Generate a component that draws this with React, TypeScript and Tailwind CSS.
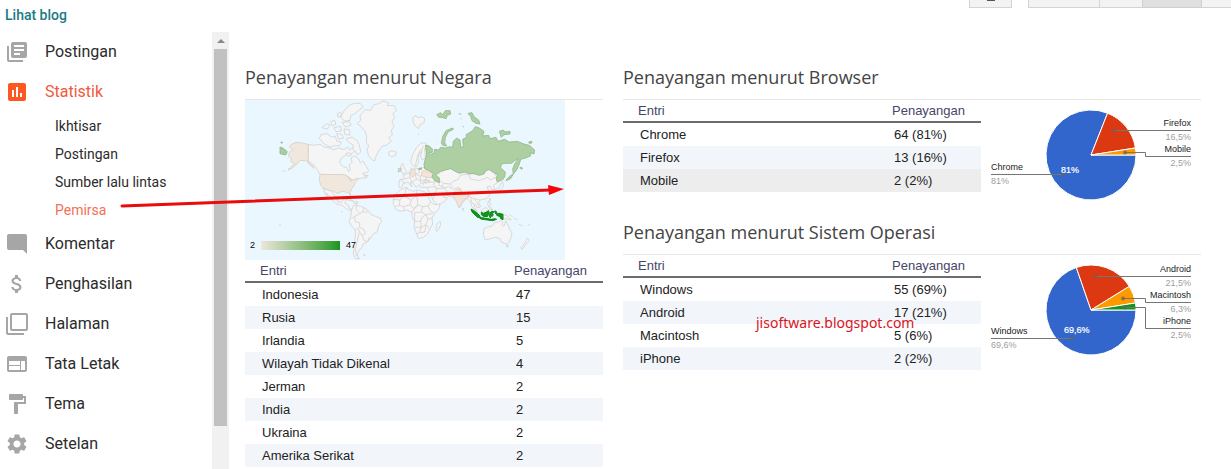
import {
  MdAttachMoney, MdFilterNone, MdFormatPaint, MdInsertChart,
  MdLibraryBooks, MdModeComment, MdSettings, MdWeb,
} from 'react-icons/md'

// --- DATA ---
const menuAtas = [{ label: 'Postingan', Icon: MdLibraryBooks }]

const subMenu = ['Ikhtisar', 'Postingan', 'Sumber lalu lintas', 'Pemirsa']

const menuBawah = [
  { label: 'Komentar', Icon: MdModeComment },
  { label: 'Penghasilan', Icon: MdAttachMoney },
  { label: 'Halaman', Icon: MdFilterNone },
  { label: 'Tata Letak', Icon: MdWeb },
  { label: 'Tema', Icon: MdFormatPaint },
  { label: 'Setelan', Icon: MdSettings },
]

const negara = [
  ['Indonesia', '47'],
  ['Rusia', '15'],
  ['Irlandia', '5'],
  ['Wilayah Tidak Dikenal', '4'],
  ['Jerman', '2'],
  ['India', '2'],
  ['Ukraina', '2'],
  ['Amerika Serikat', '2'],
]

const browser = [
  ['Chrome', '64 (81%)'],
  ['Firefox', '13 (16%)'],
  ['Mobile', '2 (2%)'],
]

const sistem = [
  ['Windows', '55 (69%)'],
  ['Android', '17 (21%)'],
  ['Macintosh', '5 (6%)'],
  ['iPhone', '2 (2%)'],
]

// --- SIDEBAR ---
function MenuItem({ label, Icon, active = false }: { label: string; Icon: any; active?: boolean }) {
  return (
    <li>
      <a href="#" className={`flex h-10 items-center gap-4 pl-[5px] text-base ${active ? 'text-[#f2583a]' : 'text-[#2b2b2b]'}`}>
        <Icon size={24} className={active ? 'text-[#ff5722]' : 'text-[#a6a6a6]'} />
        {label}
      </a>
    </li>
  )
}

function Sidebar() {
  return (
    <nav className="min-w-0 flex-1 overflow-hidden">
      <ul>
        {menuAtas.map((m) => <MenuItem key={m.label} {...m} />)}
        <MenuItem label="Statistik" Icon={MdInsertChart} active />
        <li>
          <ul>
            {subMenu.map((s) => (
              <li key={s}>
                <a href="#" className={`flex h-7 items-center pl-[55px] text-sm ${s === 'Pemirsa' ? 'text-[#f2705a]' : 'text-[#2b2b2b]'}`}>{s}</a>
              </li>
            ))}
          </ul>
        </li>
        {menuBawah.map((m) => <MenuItem key={m.label} {...m} />)}
      </ul>
    </nav>
  )
}

function Scrollbar() {
  return (
    <div className="flex w-[17px] shrink-0 flex-col bg-[#f1f1f1]">
      <div className="flex h-[17px] shrink-0 items-center justify-center">
        <svg width="8" height="4" viewBox="0 0 8 4"><path d="M0 4L4 0L8 4Z" fill="#8a8a8a" /></svg>
      </div>
      <div className="mx-0.5 flex-[377] bg-[#c1c1c1]" />
      <div className="flex-[43]" />
    </div>
  )
}

// --- TABLE ---
function TabelEntri({ rows, sorot }: { rows: string[][]; sorot?: string }) {
  return (
    <table className="w-full table-fixed border-separate border-spacing-0 text-left text-[13px] leading-5 text-[#222]">
      <thead>
        <tr className="h-[23px] text-[#464668]">
          <th className="w-[269px] border-b-2 border-[#6b6b70] p-0 pl-[15px] font-normal">Entri</th>
          <th className="border-b-2 border-[#6b6b70] p-0 font-normal">Penayangan</th>
        </tr>
      </thead>
      <tbody>
        {rows.map(([nama, nilai]) => (
          <tr key={nama} className={`h-[23px] ${nama === sorot ? 'bg-[#ededed]' : 'even:bg-[#f2f6fb]'}`}>
            <td className="p-0 pl-[17px]">{nama}</td>
            <td className="p-0 pl-0.5">{nilai}</td>
          </tr>
        ))}
      </tbody>
    </table>
  )
}

function Judul({ children }: { children: string }) {
  return (
    <h2 className="border-b border-[#e6e6e6] pb-2.5 font-['Open_Sans',sans-serif] text-lg leading-6 text-[#444]">{children}</h2>
  )
}

// --- PIE CHART ---
type Label = { nama: string; persen: string; y: number; garis: string; dot: [number, number]; kiri?: boolean }

function Pie({ nilai, dalam, labels }: { nilai: number[]; dalam: { t: string; x: number; y: number }; labels: Label[] }) {
  const warna = ['#3366cc', '#dc3912', '#ff9900', '#109618']
  let mulai = 0
  return (
    <svg viewBox="0 0 220 110" className="h-[110px] w-[220px] shrink-0 font-['Liberation_Sans',Arial,sans-serif] text-[9px]">
      {nilai.map((v, i) => {
        const a = (mulai / 100) * Math.PI * 2
        mulai += v
        const b = (mulai / 100) * Math.PI * 2
        const d = `M110 55L${110 + 45 * Math.cos(a)} ${55 + 45 * Math.sin(a)}A45 45 0 ${v > 50 ? 1 : 0} 1 ${110 + 45 * Math.cos(b)} ${55 + 45 * Math.sin(b)}Z`
        return <path key={i} d={d} fill={warna[i]} stroke="#fff" strokeWidth="1" />
      })}
      {labels.map((l) => (
        <g key={l.nama}>
          <path d={l.garis} fill="none" stroke="#757575" strokeWidth="1" />
          <circle cx={l.dot[0]} cy={l.dot[1]} r="2" fill="#636363" fillOpacity="0.7" />
          <text x={l.kiri ? 10 : 210} y={l.y} textAnchor={l.kiri ? 'start' : 'end'} fill="#222">{l.nama}</text>
          <text x={l.kiri ? 10 : 210} y={l.y + 14} textAnchor={l.kiri ? 'start' : 'end'} fill="#9e9e9e">{l.persen}</text>
        </g>
      ))}
      <text x={dalam.x} y={dalam.y} fill="#fff" stroke="#fff" strokeWidth="0.2">{dalam.t}</text>
    </svg>
  )
}

// --- WORLD MAP ---
function Peta() {
  return (
    <div className="relative h-40 w-[320px] max-w-full overflow-hidden bg-[#eaf7fe]">
      <svg viewBox="0 0 960 480" className="h-full w-full" fill="#f5f5f5" stroke="#d3d3d3" strokeWidth="2.5" strokeLinejoin="round">
        {/* Americas */}
        <g transform="translate(-15 -135)">
          <path d="M205 268L222 271L240 268L252 276L266 278L280 284L296 279L312 284L322 276L330 286L340 274L346 284L336 296L322 298L304 308L299 322L308 334L320 338L326 350L331 346L328 330L336 322L334 308L344 303L356 312L361 324L369 318L377 332L386 346L380 353L368 355L374 362L384 361L378 368L362 370L350 372L338 376L326 366L312 360L240 358L232 344L222 330L212 322L204 318Z" />
          <path d="M244 238L262 236L274 246L286 244L290 258L304 262L298 272L284 272L270 276L254 268L238 250ZM246 218L258 206L270 210L262 222ZM272 200L284 196L288 208L276 212ZM282 218L302 214L304 228L288 230ZM290 236L306 238L310 250L296 252ZM312 222L328 224L330 240L314 238ZM336 246L352 258L358 270L362 292L352 300L346 288L338 282L340 270L326 262L318 252ZM302 186L312 168L326 152L344 144L362 146L370 156L356 166L344 176L332 182L330 196L314 198ZM306 202L328 200L334 210L316 216ZM318 296L328 292L334 300L324 304ZM292 176L302 172L304 184L294 186Z" />
          <path d="M352 206L362 196L360 182L376 164L392 166L400 150L416 146L430 138L446 144L442 152L462 152L470 166L458 176L464 186L456 200L462 214L454 226L457 240L446 248L454 258L440 270L426 274L416 288L408 304L404 318L396 314L386 302L381 286L386 272L379 262L380 244L374 226L362 214Z" />
          <path d="M446 292L456 287L469 292L467 300L456 306L446 300Z" />
          <path d="M250 400L268 406L276 410L282 420L290 426L293 440L304 442L312 432L320 432L314 444L324 450L328 460L340 464L334 468L320 462L308 452L288 446L276 434L264 418L258 414L264 428L256 418Z" />
          <path d="M312 428L328 432L340 438L326 436ZM342 440L354 441L352 446L342 444ZM374 360L384 362L378 368Z" />
          <path d="M334 468L340 452L350 450L372 458L384 466L392 478L406 484L422 490L425 500L416 512L412 530L398 538L392 550L380 562L370 566L366 578L356 586L352 600L358 612L346 610L340 596L343 570L346 544L346 526L334 512L327 500L332 486Z" />
          <path d="M350 450L348 464L360 476L344 484L334 490M372 458L368 470L380 472L384 466M360 476L368 470M344 484L346 500L360 504L358 516L372 524L376 536L366 542L372 556L384 560M346 526L354 518L358 530L352 556L346 584L350 604M384 560L388 546M358 530L366 542" fill="none" />
          <circle cx="373" cy="600" r="2" /><circle cx="120" cy="510" r="1" /><circle cx="306" cy="470" r="1" />
          {/* Alaska and mainland US */}
          <g fill="#f1e8dd" stroke="#d9cfc4">
            <path d="M205 268L186 264L168 262L154 268L148 276L160 284L148 292L146 304L154 310L152 320L164 326L154 336L144 344L158 338L172 326L180 316L196 317L206 322L218 332L222 340L206 326L204 318Z" />
            <path d="M240 358L314 359L326 366L328 374L338 376L350 370L356 372L346 382L342 392L336 400L330 412L332 422L324 412L306 409L292 416L282 408L268 406L250 400L242 390L238 374Z" />
          </g>
          <path d="M318 362L326 368L334 380M326 368L338 376" fill="none" />
          <path d="M120 276L130 280L142 290L137 300L120 296ZM122 262L127 261L126 265Z" fill="#a9cd9f" stroke="#8fb886" />
          <path d="M126 348L130 349M133 349L137 347M145 345L150 343" />
        </g>

        {/* Europe, Africa, Asia, Oceania */}
        <g transform="translate(465 -30)">
          <path d="M38 84L48 76L54 84L64 80L74 86L72 98L60 104L56 116L46 108L40 98ZM54 132L58 133" />
          <path d="M38 226L32 214L38 194L50 172L62 160L76 158L82 168L74 176L76 204L66 210L62 198L66 184L58 190L54 206L56 218L48 232Z" />
          <path d="M46 228L52 200L62 178M64 184L70 168" fill="none" />
          <path d="M2 228L8 220L12 232L20 246L8 252L4 242Z" />
          <path d="M-5 236L3 234L2 244L-5 246Z" fill="#d3e2c8" stroke="#b5c9ab" />
          <path d="M-3 278L0 268L12 268L10 256L28 248L34 234L40 238L72 232L96 240L118 252L116 240L130 240L150 235L170 245L210 250L240 255L266 240L286 250L294 276L280 286L284 298L276 300L270 288L262 290L266 304L270 314L260 326L240 330L236 338L242 350L232 354L226 344L222 352L232 368L226 366L216 350L210 334L200 324L188 338L178 354L168 330L160 322L146 318L126 312L132 322L142 324L132 336L112 346L98 328L88 306L80 292L62 292L58 284L48 292L40 280L30 276L36 290L24 276L10 280L6 292L-3 292Z" />
          <path d="M0 268L14 280M12 268L30 262L28 248M30 262L36 276L50 268L44 252L58 248L56 236M50 268L62 272L60 258L44 252M62 272L78 268L90 276L62 280ZM78 268L76 252L94 248M60 258L76 256M90 276L106 276L100 284L112 296L132 294L140 304L146 318M80 292L100 290L112 296L106 306L98 328M118 270L130 280L150 282L160 274L176 268L180 256L206 252L210 266L238 272L262 262L272 270L286 262M130 280L126 290L132 294L146 290L160 298L176 292L186 306L206 312L212 322L222 326L240 330M106 256L118 272L116 286L128 290M150 282L158 292M206 312L204 324M212 322L216 340L226 344M222 326L232 338L236 350" fill="none" />
          <path d="M34 240L44 236L46 252L38 262L31 254Z" fill="#f4e4d8" stroke="#dccfc4" />
          <path d="M66 244L76 242L96 248L98 260L88 264L74 260L64 256Z" fill="#f4e4d8" stroke="#dccfc4" />
          <path d="M90 272L76 272L68 286M70 274L82 270L88 276L76 280Z" fill="#eaf7fe" />
          <path d="M-20 326L-12 312L0 300L20 292L26 300L42 304L50 300L76 306L82 316L92 336L104 344L120 342L118 354L104 370L96 384L98 402L90 416L84 430L70 442L56 446L50 432L42 412L44 394L36 380L36 366L20 360L0 364L-12 358L-20 342Z" />
          <path d="M-20 328L0 330L12 318L20 292M0 330L-2 346L-14 350M-2 346L10 350L14 362M12 318L34 330L30 344L10 350M34 330L50 316L50 300M50 316L78 318M50 316L54 344L36 366M30 344L40 356L54 344L68 350L84 348L92 336M68 350L64 366L78 374L98 370M64 366L44 368L44 394L62 394L66 382L78 374L84 388L96 384M62 394L64 412L44 412M64 412L78 404L84 388M64 412L58 428L50 432M78 404L88 416M84 348L90 362L104 370M60 428L74 426L78 404" fill="none" />
          <path d="M108 416L112 400L121 395L122 404L114 422L108 424Z" />
          <path d="M160 310L164 304L172 298L182 296L184 306L196 314L206 316L202 324L192 328L184 340L180 352L176 352L170 334L162 326Z" fill="#f4e4d8" stroke="#dccfc4" />
          <path d="M188 354L192 358L188 362ZM268 326L272 326L269 334ZM264 334L272 340L270 350L278 360L270 358L264 346ZM290 304L304 300L310 288L308 276L302 280L298 294L286 298ZM302 274L312 268L306 264ZM226 356L232 366L236 374ZM244 362L258 352L264 358L258 366L248 370Z" />
          <path d="M252 416L262 411L276 408L284 398L296 396L302 392L308 396L304 404L312 408L318 392L322 402L328 414L336 430L332 446L326 458L318 462L304 456L300 446L286 442L272 446L256 450L250 434ZM318 466L325 466L322 472Z" />
          <path d="M308 372L322 378L334 390L318 386L308 388ZM328 374L338 380M342 384L352 390M356 402L368 408M384 406L390 402M382 444L388 452L378 462L366 478L362 474L374 460Z" />

          {/* Rusia */}
          <g fill="#aecfa2" stroke="#94b78c">
            <path d="M76 166L88 168L98 178L96 188L86 188L92 194L102 188L104 178L116 180L122 172L136 174L150 170L158 172L160 154L170 144L180 150L182 172L190 170L188 148L200 142L198 134L218 122L226 110L238 114L252 124L248 138L266 136L270 146L288 142L294 154L314 148L328 156L352 154L372 162L388 166L404 180L402 192L390 188L392 198L376 204L362 208L358 222L350 240L340 252L338 236L346 218L356 206L344 212L334 220L316 220L304 222L302 234L316 246L314 262L300 272L292 276L288 264L294 254L284 250L268 238L256 242L252 252L238 256L220 250L208 252L196 246L178 250L166 244L152 236L136 240L118 246L108 254L118 264L118 278L104 272L96 262L100 250L88 242L74 236L72 222L76 206L80 192Z" />
            <path d="M124 160L128 140L138 122L158 114L160 118L144 126L136 142L134 158L140 168L128 166ZM110 74L122 68L128 74L136 62L150 62L152 72L142 76L138 86L126 82L116 82ZM204 70L216 68L222 80L236 90L240 102L228 100L216 92L212 80ZM298 124L310 120L316 126L330 124L330 132L312 134L304 142ZM386 156L396 154L394 160L388 160ZM320 268L330 258L340 252L332 266L318 272ZM360 232L368 234L364 238Z" />
            <path d="M176 72L184 72M182 86L184 86M188 108L192 112M56 236L64 234L65 238L57 239Z" />
          </g>

          {/* Indonesia */}
          <g fill="#109618" stroke="#0f8a1a" strokeWidth="3">
            <path d="M213 357L222 362L232 370L240 378L240 384L232 382L222 372L216 366ZM240 382L252 384L264 386L274 388L284 386L290 388L278 392L262 390L242 387ZM244 366L250 370L260 366L266 362L268 370L262 380L250 379L244 374ZM270 370L274 364L284 365L280 369L274 370L280 374L276 380L274 376L271 384L268 378ZM286 362L290 366L287 372ZM290 370L298 370L309 373L309 389L302 386L300 380L290 376Z" />
          </g>
        </g>
      </svg>
      {/* Legend */}
      <div className="absolute bottom-[9px] left-[5px] flex items-center gap-1.5 text-[9px] leading-3 text-black [text-shadow:0_0_2px_white,0_0_2px_white]">
        <span>2</span>
        <span className="h-[9px] w-[79px] bg-linear-to-r from-[#efe6dc] to-[#109618]" />
        <span>47</span>
      </div>
    </div>
  )
}

export default function App() {
  return (
    <div className="relative flex h-screen flex-col overflow-hidden bg-white font-['Liberation_Sans',Arial,sans-serif]">
      {/* Top bar */}
      <header className="flex h-8 shrink-0 items-start justify-between">
        <a href="#" className="pl-[5px] pt-[5px] font-['Roboto',sans-serif] text-sm font-medium leading-5 text-[#1b7a85]">Lihat blog</a>
        <div className="flex h-2">
          <button aria-label="Segarkan" className="mr-4 flex w-[43px] items-start justify-center border border-t-0 border-[#d4d4d4] bg-[#f3f3f3]">
            <span className="h-px w-2 bg-[#555]" />
          </button>
          <button aria-label="Hari" className="w-[72px] border border-t-0 border-[#d4d4d4] bg-[#f3f3f3]" />
          <button aria-label="Minggu" className="w-[42px] border-b border-[#d4d4d4] bg-[#f3f3f3]" />
          <button aria-label="Bulan" className="w-[60px] border border-t-0 border-[#cfcfcf] bg-[#e0e0e0]" />
          <button aria-label="Sepanjang waktu" className="w-[29px] border-b border-[#d4d4d4] bg-[#f3f3f3]" />
        </div>
      </header>

      <div className="flex min-h-0 flex-1">
        <aside className="flex w-[229px] shrink-0 font-['Roboto',sans-serif]">
          <Sidebar />
          <Scrollbar />
        </aside>

        <main className="grid flex-1 grid-cols-[358fr_578fr] items-start gap-5 pl-4 pr-[30px] pt-[33px]">
          <section>
            <Judul>Penayangan menurut Negara</Judul>
            <Peta />
            <TabelEntri rows={negara} />
          </section>

          <div className="flex flex-col gap-2.5">
            <section>
              <Judul>Penayangan menurut Browser</Judul>
              <div className="flex items-start">
                <TabelEntri rows={browser} sorot="Mobile" />
                <Pie
                  nilai={[81, 16.5, 2.5]}
                  dalam={{ t: '81%', x: 80, y: 73 }}
                  labels={[
                    { nama: 'Chrome', persen: '81%', y: 70, garis: 'M10 74.5H82', dot: [82, 74.5], kiri: true },
                    { nama: 'Firefox', persen: '16,5%', y: 26, garis: 'M133 30.5H210', dot: [133, 30.5] },
                    { nama: 'Mobile', persen: '2,5%', y: 52, garis: 'M144 52.5H164.5V56.5H210', dot: [144, 52.5] },
                  ]}
                />
              </div>
            </section>

            <section>
              <Judul>Penayangan menurut Sistem Operasi</Judul>
              <div className="relative flex items-start">
                <TabelEntri rows={sistem} />
                <Pie
                  nilai={[69.7, 21.5, 6.3, 2.5]}
                  dalam={{ t: '69,6%', x: 83, y: 78 }}
                  labels={[
                    { nama: 'Windows', persen: '69,6%', y: 79, garis: 'M10 83.5H91', dot: [91, 83.5], kiri: true },
                    { nama: 'Android', persen: '21,5%', y: 17, garis: 'M115 21.5H210', dot: [115, 21.5] },
                    { nama: 'Macintosh', persen: '6,3%', y: 43, garis: 'M142 43.5H164.5V47.5H210', dot: [142, 43.5] },
                    { nama: 'iPhone', persen: '2,5%', y: 69, garis: 'M144 52.5H164.5V73.5H210', dot: [144, 52.5] },
                  ]}
                />
                <span className="absolute left-[133px] top-[58px] font-['Noto_Sans',sans-serif] text-sm leading-5 text-[#dd1420]">jisoftware.blogspot.com</span>
              </div>
            </section>
          </div>
        </main>
      </div>

      {/* Arrow from Pemirsa to the reports */}
      <svg className="pointer-events-none absolute left-[119px] top-[180px]" width="450" height="32" viewBox="0 0 450 32">
        <path d="M3 26L432 10" stroke="#e80c0c" strokeWidth="3" strokeLinecap="round" />
        <path d="M429 5L445 9L430 15Z" fill="#f50505" />
      </svg>
    </div>
  )
}
